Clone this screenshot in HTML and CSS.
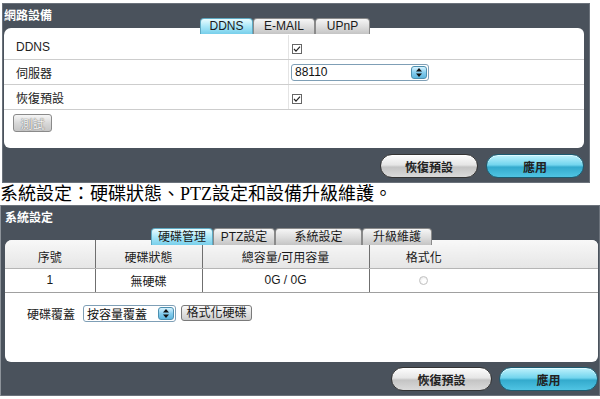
FILE: index.html
```html
<!DOCTYPE html>
<html lang="zh-Hant">
<head>
    <meta charset="UTF-8">
    <meta name="viewport" content="width=device-width, initial-scale=1.0">
    <title>網路設備 / 系統設定</title>
    <link rel="stylesheet" href="styles.css">
</head>
<body>

	<section class="panel panel-net">
		<div class="panel-head">
			<h2 class="panel-title">網路設備</h2>
			<ul class="tabs">
				<li class="tab active">DDNS</li>
				<li class="tab">E-MAIL</li>
				<li class="tab">UPnP</li>
			</ul>
		</div>
		<div class="panel-body">
			<div class="form-row">
				<span class="form-label">DDNS</span>
				<span class="form-value">
					<span class="check"><svg width="10" height="10" viewBox="0 0 10 10"><rect x="0.5" y="0.5" width="9" height="9" fill="#fff" stroke="#666"/><path d="M2 5 L4 7.2 L8 2.6" fill="none" stroke="#222" stroke-width="1.2"/></svg></span>
				</span>
			</div>
			<div class="form-row">
				<span class="form-label">伺服器</span>
				<span class="form-value">
					<span class="select select-server">
						<span>88110</span>
						<span class="select-spin"><svg width="8" height="11" viewBox="0 0 8 11"><path d="M4 1 L7 4.5 L1 4.5 Z M1 6.5 L7 6.5 L4 10 Z" fill="#111"/></svg></span>
					</span>
				</span>
			</div>
			<div class="form-row">
				<span class="form-label">恢復預設</span>
				<span class="form-value">
					<span class="check"><svg width="10" height="10" viewBox="0 0 10 10"><rect x="0.5" y="0.5" width="9" height="9" fill="#fff" stroke="#666"/><path d="M2 5 L4 7.2 L8 2.6" fill="none" stroke="#222" stroke-width="1.2"/></svg></span>
				</span>
			</div>
			<button type="button" class="btn-test" disabled>測試</button>
		</div>
		<div class="panel-foot">
			<button type="button" class="pill pill-grey">恢復預設</button>
			<button type="button" class="pill pill-blue">應用</button>
		</div>
	</section>

	<p class="caption">系統設定：硬碟狀態、PTZ設定和設備升級維護。</p>

	<section class="panel panel-sys">
		<div class="panel-head">
			<h2 class="panel-title">系統設定</h2>
			<ul class="tabs">
				<li class="tab active">硬碟管理</li>
				<li class="tab">PTZ設定</li>
				<li class="tab">系統設定</li>
				<li class="tab">升級維護</li>
			</ul>
		</div>
		<div class="panel-body">
			<table class="disk-table">
				<colgroup>
					<col class="c-no">
					<col class="c-state">
					<col class="c-size">
					<col class="c-format">
					<col>
				</colgroup>
				<thead>
					<tr>
						<th class="divided">序號</th>
						<th class="divided">硬碟狀態</th>
						<th class="divided">總容量/可用容量</th>
						<th>格式化</th>
						<th></th>
					</tr>
				</thead>
				<tbody>
					<tr>
						<td class="divided">1</td>
						<td class="divided">無硬碟</td>
						<td class="divided">0G / 0G</td>
						<td><span class="radio"></span></td>
						<td></td>
					</tr>
				</tbody>
			</table>
			<div class="disk-controls">
				<span class="disk-label">硬碟覆蓋</span>
				<span class="select select-cover">
					<span>按容量覆蓋</span>
					<span class="select-spin"><svg width="8" height="11" viewBox="0 0 8 11"><path d="M4 1 L7 4.5 L1 4.5 Z M1 6.5 L7 6.5 L4 10 Z" fill="#111"/></svg></span>
				</span>
				<button type="button" class="btn-format">格式化硬碟</button>
			</div>
		</div>
		<div class="panel-foot">
			<button type="button" class="pill pill-grey">恢復預設</button>
			<button type="button" class="pill pill-blue">應用</button>
		</div>
	</section>

</body>
</html>
```

FILE: styles.css
```css
* {
	box-sizing: border-box;
	margin: 0;
	padding: 0;
}
body {
	margin: 0;
	background: #fff;
	font-family: "Liberation Sans", "Noto Sans CJK TC", sans-serif;
	font-size: 12px;
	color: #222;
}
button {
	font-family: inherit;
	font-size: 12px;
	cursor: pointer;
}

/* dark panels */
.panel {
	display: flex;
	flex-direction: column;
	background: #4a525c;
	border: 1px solid #6b727b;
}
.panel-net {
	width: 588px;
	height: 180px;
	margin: 3px 0 0 2px;
	padding: 0 5px 0 1px;
}
.panel-sys {
	width: 600px;
	height: 191px;
	padding: 0 1px 0 4px;
	border-left-color: #8d939a;
}
.panel-head {
	display: flex;
	align-items: flex-end;
}
.panel-net .panel-head {
	height: 24px;
}
.panel-sys .panel-head {
	height: 34px;
}
.panel-title {
	align-self: flex-start;
	margin-top: 5px;
	color: #fff;
	font-size: 12px;
	font-weight: bold;
	line-height: 14px;
}
.panel-net .panel-title {
	flex: 0 0 196px;
}
.panel-sys .panel-title {
	flex: 0 0 146px;
}

/* tabs */
.tabs {
	display: flex;
	list-style: none;
	position: relative;
	z-index: 1;
}
.panel-net .tabs {
	margin-bottom: -6px;
}
.panel-sys .tabs {
	margin-bottom: -5px;
}
.tab {
	height: 16px;
	line-height: 15px;
	text-align: center;
	color: #1a1a1a;
	border: 1px solid #8a8a8a;
	border-bottom: none;
	border-radius: 4px 4px 0 0;
	background: linear-gradient(#f6f6f6, #dcdcdc 55%, #c4c4c4);
}
.panel-sys .tab {
	height: 17px;
	line-height: 16px;
}
.tab.active {
	border-color: #5ea9c2;
	background: linear-gradient(#e9fcff, #a9e7f8 50%, #78cfeb);
}
.panel-net .tab:nth-child(1) { width: 53px; }
.panel-net .tab:nth-child(2) { width: 62px; }
.panel-net .tab:nth-child(3) { width: 55px; }
.panel-sys .tab:nth-child(1) { width: 62px; }
.panel-sys .tab:nth-child(2) { width: 62px; }
.panel-sys .tab:nth-child(3) { width: 87px; }
.panel-sys .tab:nth-child(4) { width: 70px; }

/* white body */
.panel-body {
	background: #fff;
	border-radius: 7px 6px 6px 6px;
	overflow: hidden;
}
.panel-net .panel-body {
	height: 120px;
	padding-top: 7px;
}
.panel-sys .panel-body {
	height: 122px;
}

.form-row {
	display: flex;
	align-items: center;
	height: 25px;
	border-bottom: 1px solid #cdcdcd;
}
.form-label {
	flex: 0 0 284px;
	padding-left: 12px;
}
.form-value {
	flex: 1;
	align-self: stretch;
	display: flex;
	align-items: center;
	padding-left: 3px;
	border-left: 1px solid #e4e4e4;
}
.check {
	display: flex;
	margin-top: 3px;
}
.select {
	display: flex;
	align-items: center;
	justify-content: space-between;
	height: 17px;
	padding: 0 1px 0 3px;
	background: #fff;
	border: 1px solid #7f9fb6;
	border-radius: 3px;
	color: #111;
}
.select-server {
	width: 138px;
	margin-left: -1px;
}
.select-spin {
	display: flex;
	align-items: center;
	justify-content: center;
	width: 16px;
	height: 13px;
	border: 1px solid #4d90b0;
	border-radius: 3px;
	background: linear-gradient(#d8f3ff, #86cdee 50%, #5db6de);
}
.btn-test {
	width: 39px;
	height: 18px;
	margin: 4px 0 0 9px;
	border: 1px solid #8a8a8a;
	border-radius: 3px;
	background: linear-gradient(#f6f6f6, #d6d6d6 55%, #c6c6c6);
	color: #f4f4f4;
	text-shadow: 0 0 1px #777, 0 0 1px #777;
}

/* disk table */
.disk-table {
	width: 100%;
	border-collapse: collapse;
	table-layout: fixed;
}
.c-no { width: 90px; }
.c-state { width: 107px; }
.c-size { width: 167px; }
.c-format { width: 109px; }
.disk-table th {
	height: 28px;
	padding-top: 5px;
	font-weight: normal;
	color: #1a1a1a;
	background: linear-gradient(#f8f8f8, #e6e6e6);
	border-bottom: 1px solid #b5b5b5;
}
.disk-table td {
	height: 24px;
	text-align: center;
	color: #1a1a1a;
	border-bottom: 1px solid #a0a0a0;
}
.disk-table .divided {
	border-right: 1px solid #6f6f6f;
}
.radio {
	display: inline-block;
	width: 9px;
	height: 9px;
	margin-top: 3px;
	border-radius: 50%;
	border: 1px solid #c2c2c2;
	background: radial-gradient(circle at 60% 65%, #fff 30%, #e0e0e0);
}
.disk-controls {
	display: flex;
	align-items: center;
	margin-top: 12px;
	padding-left: 22px;
}
.disk-label {
	margin-right: 8px;
}
.select-cover {
	width: 93px;
}
.btn-format {
	width: 71px;
	height: 16px;
	margin-left: 5px;
	line-height: 13px;
	border: 1px solid #7a7a7a;
	border-radius: 3px;
	background: linear-gradient(#fafafa, #e0e0e0 55%, #cdcdcd);
	color: #1a1a1a;
}

/* footer pills */
.panel-foot {
	display: flex;
	justify-content: flex-end;
	align-items: flex-start;
}
.panel-net .panel-foot {
	gap: 8px;
	padding-top: 6px;
}
.panel-sys .panel-foot {
	gap: 7px;
	padding-top: 5px;
}
.pill {
	width: 98px;
	height: 24px;
	border-radius: 12px;
	font-weight: bold;
	color: #222;
}
.panel-sys .pill-grey {
	width: 101px;
}
.panel-sys .pill-blue {
	width: 99px;
}
.pill-grey {
	border: 1px solid #333;
	background: linear-gradient(#fdfdfd, #e6e6e6 45%, #c4c4c4 55%, #dadada);
	box-shadow: inset 0 1px 0 #fff;
}
.pill-blue {
	border: 1px solid #1c5b70;
	background: linear-gradient(#bff2fc, #72d5ee 45%, #33aacd 55%, #50c4e3);
	box-shadow: inset 0 1px 0 #dff9ff;
}

/* caption between the panels */
.caption {
	height: 22px;
	font-family: "Liberation Serif", "Noto Sans CJK TC", serif;
	font-size: 18px;
	line-height: 22px;
	color: #000;
}
```
